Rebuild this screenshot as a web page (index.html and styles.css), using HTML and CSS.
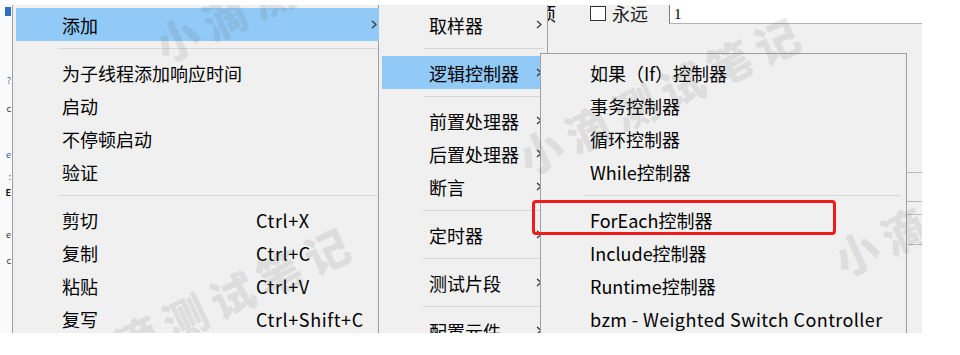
FILE: index.html
```html
<!DOCTYPE html>
<html lang="zh-CN">
<head>
    <meta charset="UTF-8">
    <title>逻辑控制器菜单</title>
    <link rel="stylesheet" href="styles.css">
</head>
<body>
    <div class="screen">
        <div class="app">
            <div class="tree">
                <span class="tree-icon"></span>
                <span class="tree-line l1">?</span>
                <span class="tree-line l2">c</span>
                <span class="tree-line l3">e</span>
                <span class="tree-line l4">:</span>
                <span class="tree-line l5">E</span>
                <span class="tree-line l6">e</span>
                <span class="tree-line l7">c</span>
            </div>
            <div class="main">
                <div class="loop-row">
                    <span class="cut-label">项</span>
                    <span class="check"></span>
                    <span class="check-label">永远</span>
                    <span class="field">1</span>
                </div>
                <div class="rules">
                    <div class="rule r1"></div>
                    <div class="rule r2"></div>
                    <div class="rule r3"></div>
                    <div class="rule r4"></div>
                </div>
            </div>
        </div>

        <!-- 右键菜单 -->
        <div class="menu menu-main">
            <div class="item active">
                <span class="label">添加</span>
                <svg class="arrow" width="6" height="9" viewBox="0 0 6 9"><path d="M1 1l4 3.5L1 8" fill="none" stroke="#333" stroke-width="1.2"/></svg>
            </div>
            <div class="sep"></div>
            <div class="item"><span class="label">为子线程添加响应时间</span></div>
            <div class="item"><span class="label">启动</span></div>
            <div class="item"><span class="label">不停顿启动</span></div>
            <div class="item"><span class="label">验证</span></div>
            <div class="sep"></div>
            <div class="item"><span class="label">剪切</span><span class="key">Ctrl+X</span></div>
            <div class="item"><span class="label">复制</span><span class="key">Ctrl+C</span></div>
            <div class="item"><span class="label">粘贴</span><span class="key">Ctrl+V</span></div>
            <div class="item"><span class="label">复写</span><span class="key">Ctrl+Shift+C</span></div>
        </div>

        <div class="menu menu-add">
            <div class="item"><span class="label">取样器</span><svg class="arrow" width="6" height="9" viewBox="0 0 6 9"><path d="M1 1l4 3.5L1 8" fill="none" stroke="#333" stroke-width="1.2"/></svg></div>
            <div class="sep"></div>
            <div class="item active"><span class="label">逻辑控制器</span><svg class="arrow" width="6" height="9" viewBox="0 0 6 9"><path d="M1 1l4 3.5L1 8" fill="none" stroke="#333" stroke-width="1.2"/></svg></div>
            <div class="sep"></div>
            <div class="item"><span class="label">前置处理器</span><svg class="arrow" width="6" height="9" viewBox="0 0 6 9"><path d="M1 1l4 3.5L1 8" fill="none" stroke="#333" stroke-width="1.2"/></svg></div>
            <div class="item"><span class="label">后置处理器</span><svg class="arrow" width="6" height="9" viewBox="0 0 6 9"><path d="M1 1l4 3.5L1 8" fill="none" stroke="#333" stroke-width="1.2"/></svg></div>
            <div class="item"><span class="label">断言</span><svg class="arrow" width="6" height="9" viewBox="0 0 6 9"><path d="M1 1l4 3.5L1 8" fill="none" stroke="#333" stroke-width="1.2"/></svg></div>
            <div class="sep"></div>
            <div class="item"><span class="label">定时器</span><svg class="arrow" width="6" height="9" viewBox="0 0 6 9"><path d="M1 1l4 3.5L1 8" fill="none" stroke="#333" stroke-width="1.2"/></svg></div>
            <div class="sep"></div>
            <div class="item"><span class="label">测试片段</span><svg class="arrow" width="6" height="9" viewBox="0 0 6 9"><path d="M1 1l4 3.5L1 8" fill="none" stroke="#333" stroke-width="1.2"/></svg></div>
            <div class="sep"></div>
            <div class="item"><span class="label">配置元件</span><svg class="arrow" width="6" height="9" viewBox="0 0 6 9"><path d="M1 1l4 3.5L1 8" fill="none" stroke="#333" stroke-width="1.2"/></svg></div>
        </div>

        <div class="menu menu-logic">
            <div class="item"><span class="label">如果（If）控制器</span></div>
            <div class="item"><span class="label">事务控制器</span></div>
            <div class="item"><span class="label">循环控制器</span></div>
            <div class="item"><span class="label">While控制器</span></div>
            <div class="sep"></div>
            <div class="item"><span class="label">ForEach控制器</span></div>
            <div class="item"><span class="label">Include控制器</span></div>
            <div class="item"><span class="label">Runtime控制器</span></div>
            <div class="item"><span class="label latin">bzm - Weighted Switch Controller</span></div>
        </div>

        <div class="mark"></div>

        <span class="watermark wm1">小滴测试笔记</span>
        <span class="watermark wm2">小滴测试笔记</span>
        <span class="watermark wm3">小滴测试笔记</span>
        <span class="watermark wm4">小滴测试笔记</span>
    </div>
</body>
</html>
```

FILE: styles.css
```css
body{
    margin:0;
    background:#fff;
    font-family:"Noto Sans CJK SC","Noto Sans",sans-serif;
    color:#000;
}
.screen{
    position:relative;
    width:922px;
    height:328px;
    margin-top:5px;
    background:#f0f0f0;
    overflow:hidden;
}
.app{
    display:flex;
    height:100%;
}
.tree{
    width:12px;
    flex:none;
    background:#fafafa;
    display:flex;
    flex-direction:column;
    align-items:flex-end;
    font-size:9px;
    line-height:10px;
    overflow:hidden;
}
.tree-icon{
    width:6px;
    height:9px;
    margin-top:2px;
    margin-right:1px;
    background:#2f6fc0;
}
.tree-line{
    color:#333;
    margin-right:1px;
}
.l1{margin-top:60px;color:#3b5a9a;}
.l2{margin-top:18px;}
.l3{margin-top:36px;color:#3b5a9a;}
.l4{margin-top:12px;color:#3b5a9a;}
.l5{margin-top:6px;font-weight:700;color:#111;}
.l6{margin-top:32px;}
.l7{margin-top:16px;}
.main{
    flex:1;
    display:flex;
    flex-direction:column;
}
.loop-row{
    display:flex;
    align-items:center;
    height:22px;
    margin-top:-3px;
    padding-left:526px;
    font-size:18px;
}
.cut-label{
    width:52px;
    line-height:19px;
}
.check{
    width:14px;
    height:13px;
    border:1px solid #333;
    background:#fff;
    margin-right:6px;
}
.check-label{
    width:57px;
    line-height:19px;
    color:#222;
}
.field{
    flex:1;
    height:21px;
    background:#fff;
    border-left:1px solid #7a7a7a;
    border-bottom:1px solid #b4b4b4;
    padding-left:4px;
    font-size:15px;
    line-height:24px;
    font-family:"Liberation Serif",serif;
}
.rules{
    padding-top:148px;
}
.rule{
    border-top:1px solid #b9b9b9;
}
.r1{height:28px;}
.r2{height:12px;}
.r3{height:29px;}

/* menus */
.menu{
    position:absolute;
    top:0;
    background:#f0f0f0;
    font-size:18px;
    padding:3px 3px 0;
    box-sizing:border-box;
}
.menu-main{
    left:12px;
    width:367px;
    height:340px;
    border-left:1px solid #a0a0a0;
    border-right:1px solid #a0a0a0;
}
.menu-add{
    left:379px;
    width:169px;
    height:340px;
    border-right:1px solid #a0a0a0;
}
.menu-logic{
    left:540px;
    top:48px;
    width:367px;
    height:300px;
    border:1px solid #a0a0a0;
    padding-top:2px;
}
.item{
    display:flex;
    align-items:center;
    height:33px;
    white-space:nowrap;
}
.item.active{
    background:#91c9f7;
}
.menu-main .item{
    padding-left:46px;
}
.menu-main .item.active{
    margin-right:-5px;
}
.menu-main .label{
    width:194px;
}
.menu-add .item{
    padding-left:47px;
}
.menu-add .label{
    flex:1;
}
.menu-logic .item{
    padding-left:46px;
}
.latin{
    letter-spacing:0.4px;
}
.arrow{
    margin-left:auto;
    margin-right:3px;
}
.menu-add .arrow{
    margin-right:2px;
}
.key{
    letter-spacing:0.6px;
}
.sep{
    height:15px;
    display:flex;
    align-items:center;
}
.sep::after{
    content:"";
    flex:1;
    border-top:1px solid #d7d7d7;
}
.menu-main .sep{
    margin-left:42px;
    margin-right:-3px;
}
.menu-add .sep{
    margin-left:41px;
}
.menu-logic .sep{
    margin-left:41px;
    margin-right:3px;
}

/* 标注框 */
.mark{
    position:absolute;
    left:532px;
    top:195px;
    width:304px;
    height:35px;
    box-sizing:border-box;
    border:3px solid #f01c1c;
    border-radius:4px;
}

/* 水印 */
.watermark{
    position:absolute;
    font-size:44px;
    line-height:44px;
    font-weight:900;
    letter-spacing:8px;
    color:rgba(90,90,90,0.14);
    white-space:nowrap;
    transform:rotate(-25deg);
    transform-origin:0 50%;
    pointer-events:none;
}
.wm1{left:157px;top:20px;}
.wm2{left:520px;top:132px;}
.wm3{left:70px;top:342px;}
.wm4{left:836px;top:234px;}
```
